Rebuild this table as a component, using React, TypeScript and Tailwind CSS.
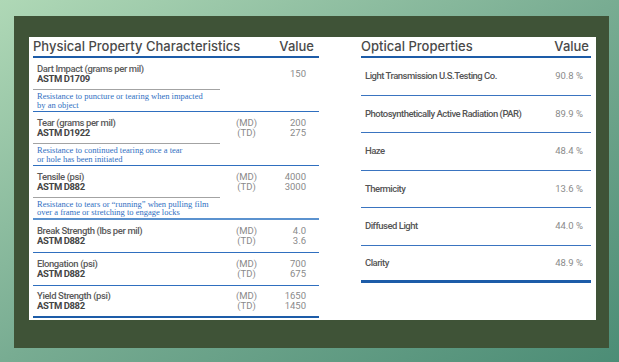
import React from 'react'

const physical = [
  {
    name: 'Dart Impact (grams per mil)',
    astm: 'ASTM D1709',
    md: null,
    values: ['150'],
    desc: ['Resistance to puncture or tearing when impacted', 'by an object'],
  },
  {
    name: 'Tear (grams per mil)',
    astm: 'ASTM D1922',
    md: true,
    values: ['200', '275'],
    desc: ['Resistance to continued tearing once a tear', 'or hole has been initiated'],
  },
  {
    name: 'Tensile (psi)',
    astm: 'ASTM D882',
    md: true,
    values: ['4000', '3000'],
    desc: ['Resistance to tears or \u201crunning\u201d when pulling film', 'over a frame or stretching to engage locks'],
  },
  { name: 'Break Strength (lbs per mil)', astm: 'ASTM D882', md: true, values: ['4.0', '3.6'], desc: null },
  { name: 'Elongation (psi)', astm: 'ASTM D882', md: true, values: ['700', '675'], desc: null },
  { name: 'Yield Strength (psi)', astm: 'ASTM D882', md: true, values: ['1650', '1450'], desc: null },
]

const optical = [
  ['Light Transmission U.S.Testing Co.', '90.8 %'],
  ['Photosynthetically Active Radiation (PAR)', '89.9 %'],
  ['Haze', '48.4 %'],
  ['Thermicity', '13.6 %'],
  ['Diffused Light', '44.0 %'],
  ['Clarity', '48.9 %'],
]

const labelFont = "font-['Roboto',sans-serif]"

export default function App() {
  return (
    <div className="h-[362px] w-[619px] overflow-hidden bg-gradient-to-br from-[#afd8b6] via-[#78ac92] to-[#4c8d76] pl-[14px] pt-[16px]">
      <div className="h-[332px] w-[595px] bg-[#3f5337] pl-[15px] pt-[21px]">
        <div className="flex h-[283px] w-[567px] gap-[42px] bg-white pl-[4px]">
          {/* physical */}
          <div className="w-[286px]">
            <div className="flex h-[21px] items-center justify-between border-b-2 border-[#1d5ca8] pr-[5px] font-['Inter',sans-serif] text-[13px] font-medium leading-[19px] text-[#4a4a4a]">
              <span>Physical Property Characteristics</span>
              <span>Value</span>
            </div>
            {physical.map((p, i) => (
              <div key={p.name}>
                <div
                  className={
                    p.desc
                      ? 'flex h-[32px] items-stretch'
                      : i === physical.length - 1
                        ? 'flex h-[32px] items-stretch border-b-2 border-[#1d5ca8]'
                        : 'flex h-[33px] items-stretch border-b-[1.5px] border-[#2f6fbf]'
                  }
                >
                  <div
                    className={
                      p.desc
                        ? `flex w-[187px] flex-col justify-center border-b border-[#a3a3a3] pl-[4px] ${labelFont} text-[9.5px] leading-[10px] tracking-[-0.4px] text-[#5a5a5a]`
                        : `flex w-[187px] flex-col justify-center pl-[4px] ${labelFont} text-[9.5px] leading-[10px] tracking-[-0.4px] text-[#5a5a5a]`
                    }
                  >
                    <span className="font-medium">{p.name}</span>
                    <span className="font-bold text-[#444]">{p.astm}</span>
                  </div>
                  <div className={`flex w-[53px] flex-col items-center justify-center ${labelFont} text-[9.5px] leading-[10px] text-[#8a8a8a]`}>
                    {p.md && (
                      <>
                        <span>(MD)</span>
                        <span>(TD)</span>
                      </>
                    )}
                  </div>
                  <div className={`flex w-[33px] flex-col items-end justify-center ${labelFont} text-[9.5px] leading-[10px] text-[#8a8a8a]`}>
                    {p.values.map((v) => (
                      <span key={v}>{v}</span>
                    ))}
                  </div>
                </div>
                {p.desc && (
                  <div
                    className={
                      i === 2
                        ? "flex h-[22px] flex-col justify-center border-b-2 border-[#5b92cf] pl-[4px] font-['Liberation_Serif',serif] text-[8.5px] leading-[8.5px] text-[#2f6fc2]"
                        : "flex h-[22px] flex-col justify-center border-b-[1.5px] border-[#2f6fbf] pl-[4px] font-['Liberation_Serif',serif] text-[8.5px] leading-[8.5px] text-[#2f6fc2]"
                    }
                  >
                    <span>{p.desc[0]}</span>
                    <span>{p.desc[1]}</span>
                  </div>
                )}
              </div>
            ))}
          </div>

          {/* optical */}
          <div className="w-[230px]">
            <div className="flex h-[21px] items-center justify-between border-b-2 border-[#1d5ca8] pr-[2px] font-['Inter',sans-serif] text-[13px] font-medium leading-[19px] text-[#4a4a4a]">
              <span>Optical Properties</span>
              <span>Value</span>
            </div>
            {optical.map(([label, value], i) => (
              <div
                key={label}
                className={
                  i === optical.length - 1
                    ? `flex h-[37.5px] items-center justify-between border-b-[3px] border-[#1d5ca8] pl-[4px] pr-[8px] ${labelFont} text-[9.5px]`
                    : `flex h-[37.5px] items-center justify-between border-b-[1.5px] border-[#3a74c0] pl-[4px] pr-[8px] ${labelFont} text-[9.5px]`
                }
              >
                <span className="font-medium tracking-[-0.5px] text-[#555]">{label}</span>
                <span className="text-[#8a8a8a]">{value}</span>
              </div>
            ))}
          </div>
        </div>
      </div>
    </div>
  )
}
